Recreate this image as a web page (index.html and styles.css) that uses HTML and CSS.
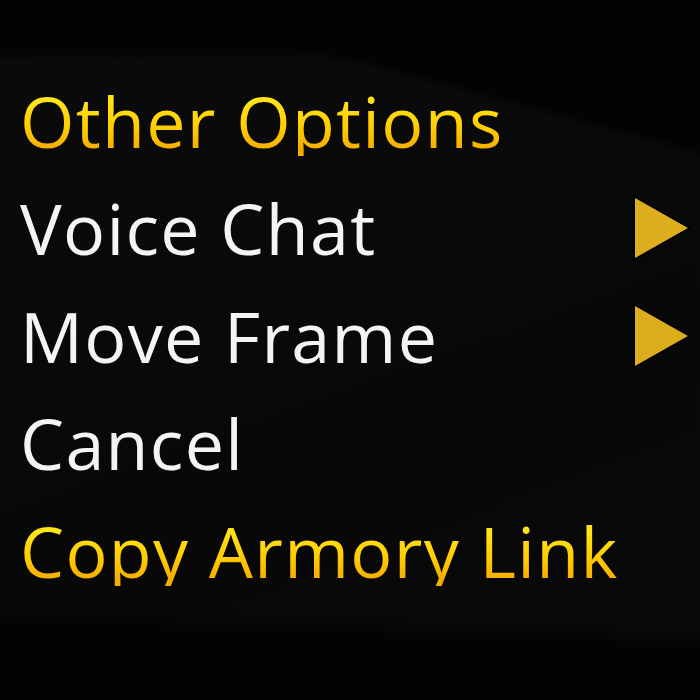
FILE: index.html
```html
<!DOCTYPE html>
<html>
<head>
<meta charset="utf-8">
<link rel="stylesheet" href="styles.css">
</head>
<body>
<div class="menu">
  <div class="row title"><span class="label gold">Other Options</span></div>
  <div class="row"><span class="label">Voice Chat</span>
    <svg class="arrow" viewBox="0 0 60 68"><polygon points="1,1 59,34 1,67" fill="#000"/><polygon points="3,4 56,34 3,64" fill="#dcae1e"/></svg></div>
  <div class="row"><span class="label">Move Frame</span>
    <svg class="arrow" viewBox="0 0 60 68"><polygon points="1,1 59,34 1,67" fill="#000"/><polygon points="3,4 56,34 3,64" fill="#dcae1e"/></svg></div>
  <div class="row"><span class="label">Cancel</span></div>
  <div class="row"><span class="label gold">Copy Armory Link</span></div>
</div>
</body>
</html>
```
FILE: styles.css
```css
html, body {
  margin: 0;
  padding: 0;
  width: 700px;
  height: 700px;
  overflow: hidden;
}
body {
  background:
    linear-gradient(180deg, #030304 0px, #030304 45px, rgba(3,3,4,0) 65px),
    linear-gradient(195deg, #030305 0px, #030305 143px, rgba(3,3,5,0) 152px),
    linear-gradient(182deg, rgba(3,3,4,0) 0px, rgba(3,3,4,0) 630px, #030304 648px),
    linear-gradient(160deg, #0b0b0b 0%, #080808 60%, #090909 100%);
}
.menu {
  display: flex;
  flex-direction: column;
  padding: 67px 8px 0 20px;
}
.row {
  height: 107.5px;
  display: flex;
  align-items: center;
  justify-content: space-between;
}
.label {
  font-family: "Open Sans", "DejaVu Sans", sans-serif;
  font-size: 70px;
  color: #f4f4f4;
  line-height: 1;
  letter-spacing: 1.3px;
}
.gold {
  color: #ffcc00;
  background: linear-gradient(180deg, #ffe41a 20%, #ffcc00 60%, #f5ae00 90%);
  -webkit-background-clip: text;
  background-clip: text;
  -webkit-text-fill-color: transparent;
}
.arrow {
  width: 60px;
  height: 68px;
}
```
